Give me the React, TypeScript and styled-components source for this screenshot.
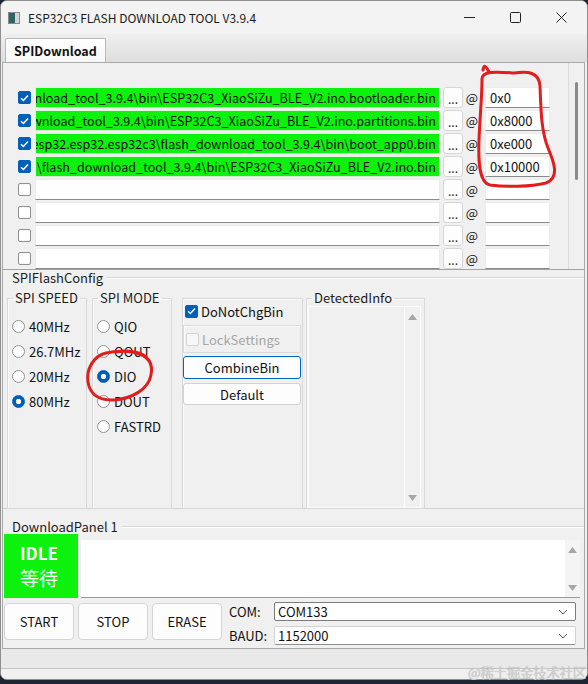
import React from "react";
import styled, { createGlobalStyle } from "styled-components";

const GlobalStyle = createGlobalStyle`
  html, body { margin: 0; padding: 0; background: #1d2633; }
  body {
    width: 588px; height: 684px; overflow: hidden;
    font-family: "Noto Sans CJK SC", "Noto Sans", sans-serif;
    font-size: 13px; color: #111;
  }
  * { box-sizing: border-box; }
`;

const Screen = styled.div`
  position: relative;
  width: 588px;
  height: 684px;
  background: #1d2633;
`;

const Window = styled.div`
  width: 588px;
  height: 680px;
  background: #f0f0f0;
  border: 1px solid #8e8e8e;
  border-radius: 7px;
  overflow: hidden;
  display: flex;
  flex-direction: column;
`;

const TitleBar = styled.div`
  height: 33px;
  flex-shrink: 0;
  display: flex;
  align-items: center;
  background: #f3f3f3;
`;

const AppIcon = styled.span`
  width: 12px;
  height: 12px;
  margin-left: 7px;
  border: 1px solid #8a8a8a;
  background: linear-gradient(to right, #2f6468 0 58%, #cfd6d6 58%);
`;

const TitleText = styled.span`
  margin-left: 8px;
  font-size: 12px;
  color: #1b1b1b;
`;

const Controls = styled.div`
  margin-left: auto;
  margin-right: 3px;
  display: flex;
`;

const CtrlButton = styled.span`
  width: 46px;
  height: 33px;
  display: flex;
  align-items: center;
  justify-content: center;
`;

const TabBar = styled.div`
  height: 28px;
  flex-shrink: 0;
  display: flex;
  align-items: flex-end;
  padding-left: 4px;
  background: linear-gradient(to bottom, #efefef, #dedede);
`;

const Tab = styled.div`
  height: 24px;
  padding: 0 8px;
  display: flex;
  align-items: center;
  font-weight: 700;
  font-size: 12.5px;
  background: linear-gradient(to bottom, #ffffff, #f6f6f6);
  border: 1px solid #b9b9b9;
  border-bottom: none;
  border-radius: 2px 2px 0 0;
`;

const TabPane = styled.div`
  height: 587px;
  flex-shrink: 0;
  margin: 0 2px 0 1px;
  border: 1px solid #a9a9a9;
  display: flex;
  flex-direction: column;
`;

/* ---------- file list ---------- */
const FileSection = styled.div`
  height: 207px;
  flex-shrink: 0;
  display: flex;
  border-bottom: 1px solid #a3a3a3;
`;

const FileList = styled.div`
  flex: 1;
  padding-top: 24px;
  display: flex;
  flex-direction: column;
  gap: 2px;
  overflow: hidden;
`;

const FileRow = styled.div`
  height: 21px;
  flex-shrink: 0;
  display: flex;
  align-items: center;
`;

const CheckCell = styled.div`
  width: 32px;
  display: flex;
  justify-content: flex-end;
  padding-right: 4px;
`;

const CheckBox = styled.span<{ $checked?: boolean; $disabled?: boolean }>`
  width: 13px;
  height: 13px;
  flex-shrink: 0;
  border-radius: 2px;
  display: inline-flex;
  align-items: center;
  justify-content: center;
  border: 1px solid
    ${(p) => (p.$checked ? "#005fb8" : p.$disabled ? "#d3d3d3" : "#8f8f8f")};
  background: ${(p) => (p.$checked ? "#005fb8" : p.$disabled ? "#f7f7f7" : "#ffffff")};
`;

const PathField = styled.div<{ $filled?: boolean }>`
  width: 405px;
  height: 21px;
  display: flex;
  align-items: center;
  justify-content: flex-end;
  overflow: hidden;
  white-space: nowrap;
  padding: 0 3px 0 0;
  font-size: 12.6px;
  background: ${(p) => (p.$filled ? "#0cf20c" : "#ffffff")};
  border: 1px solid ${(p) => (p.$filled ? "#dff5df" : "#ececec")};
  border-bottom-color: ${(p) => (p.$filled ? "#cfe9cf" : "#8a8a8a")};
`;

const PathText = styled.span`
  flex-shrink: 0;
`;

const DotsButton = styled.span`
  width: 20px;
  height: 21px;
  margin-left: 3px;
  border: 1px solid #d6d6d6;
  border-radius: 3px;
  background: #fdfdfd;
  display: flex;
  align-items: center;
  justify-content: center;
  font-size: 12px;
  line-height: 1;
  padding-top: 2px;
  color: #222;
`;

const AtSign = styled.span`
  width: 22px;
  text-align: center;
  padding-right: 4px;
  font-size: 13px;
`;

const AddrField = styled.div`
  width: 65px;
  height: 21px;
  padding-left: 4px;
  display: flex;
  align-items: center;
  font-size: 13px;
  background: #ffffff;
  border: 1px solid #ededed;
  border-bottom-color: #8a8a8a;
`;

const ListScroll = styled.div`
  width: 16px;
  flex-shrink: 0;
  border-left: 1px solid #dcdcdc;
  padding-top: 19px;
  display: flex;
  justify-content: center;
`;

const ListThumb = styled.span`
  width: 3px;
  height: 98px;
  border-radius: 2px;
  background: #8b8b8b;
`;

/* ---------- sections ---------- */
const SectionHeader = styled.div`
  height: 15px;
  flex-shrink: 0;
  display: flex;
  align-items: center;
  padding-left: 9px;
  font-size: 13px;
  color: #1b1b1b;
`;

const HeaderLine = styled.span`
  flex: 1;
  margin-left: 3px;
  border-top: 1px solid #d6d6d6;
  border-bottom: 1px solid #ffffff;
`;

const ConfigSection = styled.div`
  height: 239px;
  flex-shrink: 0;
  display: flex;
  flex-direction: column;
  border-bottom: 1px solid #d2d2d2;
`;

const GroupRow = styled.div`
  flex: 1;
  margin-top: 5px;
  margin-bottom: -1px;
  padding-left: 4px;
  display: flex;
  align-items: stretch;
`;

const Group = styled.fieldset<{ $w: number; $gap?: number; $top?: number }>`
  width: ${(p) => p.$w}px;
  margin: ${(p) => p.$top ?? 0}px ${(p) => p.$gap ?? 0}px 0 0;
  padding: 0;
  min-width: 0;
  border: 1px solid #d8d8d8;
  box-shadow: inset 1px 1px 0 #fafafa;
  display: flex;
  flex-direction: column;
`;

const Legend = styled.legend`
  margin-left: 5px;
  padding: 0 2px;
  font-size: 13px;
  line-height: 16px;
  color: #1b1b1b;
`;

const RadioList = styled.div`
  padding: 8px 0 0 4px;
  display: flex;
  flex-direction: column;
`;

const RadioItem = styled.div`
  height: 25px;
  display: flex;
  align-items: center;
  gap: 4px;
  font-size: 13px;
`;

const RadioDot = styled.span<{ $checked?: boolean }>`
  width: 13px;
  height: 13px;
  flex-shrink: 0;
  border-radius: 50%;
  border: 1px solid ${(p) => (p.$checked ? "#005fb8" : "#929292")};
  background: ${(p) =>
    p.$checked
      ? "radial-gradient(circle, #ffffff 0 2.4px, #005fb8 3px)"
      : "#ffffff"};
`;

const OptionRow = styled.div`
  height: 16px;
  margin: 4px 0 0 2px;
  display: flex;
  align-items: center;
  gap: 3px;
  font-size: 13px;
`;

const LockFrame = styled.div`
  height: 28px;
  margin-top: 6px;
  width: 118px;
  border: 1px solid #dadada;
  box-shadow: inset 1px 1px 0 #fbfbfb;
  display: flex;
  align-items: center;
  gap: 3px;
  padding-left: 2px;
  font-size: 13px;
  color: #a6a6a6;
`;

const SmallButton = styled.div<{ $focus?: boolean; $mt: number; $h: number }>`
  width: 118px;
  height: ${(p) => p.$h}px;
  margin-top: ${(p) => p.$mt}px;
  border: 1px solid ${(p) => (p.$focus ? "#0067c0" : "#d2d2d2")};
  border-radius: 3px;
  background: #fdfdfd;
  display: flex;
  align-items: center;
  justify-content: center;
  font-size: 13px;
`;

const InfoBox = styled.div`
  flex: 1;
  margin: 0 3px 0 1px;
  border: 1px solid #fbfbfb;
  display: flex;
  justify-content: flex-end;
`;

const InfoScroll = styled.div`
  width: 16px;
  border-left: 1px solid #fbfbfb;
  display: flex;
  flex-direction: column;
  align-items: center;
  justify-content: space-between;
  padding: 7px 0 6px;
`;

/* ---------- download panel ---------- */
const DownloadSection = styled.div`
  flex: 1;
  display: flex;
  flex-direction: column;
  padding-top: 10px;
`;

const StatusRow = styled.div`
  height: 64px;
  flex-shrink: 0;
  display: flex;
  align-items: flex-end;
  padding-left: 1px;
`;

const IdleBox = styled.div`
  width: 74px;
  height: 64px;
  background: #0cf20c;
  color: #ffffff;
  padding: 8px 0 0 16px;
  display: flex;
  flex-direction: column;
  gap: 3px;
`;

const IdleEn = styled.span`
  font-size: 17px;
  font-weight: 700;
  line-height: 22px;
`;

const IdleZh = styled.span`
  font-size: 19px;
  line-height: 22px;
`;

const LogArea = styled.div`
  width: 499px;
  height: 58px;
  margin-left: 3px;
  background: #ffffff;
  border-bottom: 1px solid #9a9a9a;
  display: flex;
  justify-content: flex-end;
`;

const LogScroll = styled.div`
  width: 15px;
  background: #f4f4f4;
  display: flex;
  flex-direction: column;
  align-items: center;
  justify-content: space-between;
  padding: 7px 0 6px;
`;

const ActionRow = styled.div`
  margin-top: 4px;
  padding-left: 1px;
  display: flex;
  align-items: flex-start;
`;

const ActionButton = styled.div`
  width: 70px;
  height: 37px;
  margin: 1px 4px 0 0;
  border: 1px solid #d4d4d4;
  border-radius: 4px;
  background: #fdfdfd;
  display: flex;
  align-items: center;
  justify-content: center;
  font-size: 13px;
`;

const PortForm = styled.div`
  margin-left: 3px;
  display: grid;
  grid-template-columns: 45px 302px;
  grid-auto-rows: 19px;
  row-gap: 5px;
  align-items: center;
`;

const FormLabel = styled.span`
  font-size: 13px;
`;

const Combo = styled.div<{ $active?: boolean }>`
  height: 19px;
  padding: 0 7px 0 3px;
  display: flex;
  align-items: center;
  justify-content: space-between;
  font-size: 13px;
  background: #ffffff;
  border: 1px solid ${(p) => (p.$active ? "#7b7b7b" : "#d3d3d3")};
  border-bottom-color: ${(p) => (p.$active ? "#7b7b7b" : "#8f8f8f")};
  border-radius: 2px;
`;

const StatusBar = styled.div`
  height: 20px;
  flex-shrink: 0;
  background: #e9e9e9;
  border-bottom: 1px solid #c4c4c4;
`;

const BottomFill = styled.div`
  flex: 1;
  background: #f0f0f0;
`;

const Watermark = styled.span`
  position: absolute;
  right: 2px;
  bottom: 2px;
  font-size: 13.5px;
  color: #cfcfcf;
  text-shadow: 0 0 1px rgba(90, 90, 90, 0.35);
  letter-spacing: -0.3px;
  white-space: nowrap;
`;

const Annotations = styled.svg`
  position: absolute;
  left: 0;
  top: 0;
  pointer-events: none;
`;

/* ---------- small drawings ---------- */
const Tick = () => (
  <svg width="9" height="8" viewBox="0 0 9 8">
    <path d="M1 4.2 L3.4 6.5 L8 1.5" fill="none" stroke="#fff" strokeWidth="1.5" />
  </svg>
);

const Up = () => (
  <svg width="9" height="6" viewBox="0 0 9 6">
    <polygon points="4.5,0 9,6 0,6" fill="#a6a6a6" />
  </svg>
);

const Down = () => (
  <svg width="9" height="6" viewBox="0 0 9 6">
    <polygon points="0,0 9,0 4.5,6" fill="#a6a6a6" />
  </svg>
);

const Chevron = () => (
  <svg width="10" height="6" viewBox="0 0 10 6">
    <path d="M1 1 L5 5 L9 1" fill="none" stroke="#555" strokeWidth="1" />
  </svg>
);

const base = "D:\\Arduino\\build\\esp32.esp32.esp32c3\\flash_download_tool_3.9.4\\bin\\";

const files = [
  { path: base + "ESP32C3_XiaoSiZu_BLE_V2.ino.bootloader.bin", addr: "0x0" },
  { path: base + "ESP32C3_XiaoSiZu_BLE_V2.ino.partitions.bin", addr: "0x8000" },
  { path: base + "boot_app0.bin", addr: "0xe000" },
  { path: base + "ESP32C3_XiaoSiZu_BLE_V2.ino.bin", addr: "0x10000" },
  { path: "", addr: "" },
  { path: "", addr: "" },
  { path: "", addr: "" },
  { path: "", addr: "" },
];

const speeds = [
  { label: "40MHz", on: false },
  { label: "26.7MHz", on: false },
  { label: "20MHz", on: false },
  { label: "80MHz", on: true },
];

const modes = [
  { label: "QIO", on: false },
  { label: "QOUT", on: false },
  { label: "DIO", on: true },
  { label: "DOUT", on: false },
  { label: "FASTRD", on: false },
];

export default function App() {
  return (
    <Screen>
      <GlobalStyle />
      <Window>
        <TitleBar>
          <AppIcon />
          <TitleText>ESP32C3 FLASH DOWNLOAD TOOL V3.9.4</TitleText>
          <Controls>
            <CtrlButton>
              <svg width="11" height="11" viewBox="0 0 11 11">
                <path d="M0 5.5 H11" stroke="#222" strokeWidth="1" />
              </svg>
            </CtrlButton>
            <CtrlButton>
              <svg width="11" height="11" viewBox="0 0 11 11">
                <rect x="0.5" y="0.5" width="10" height="10" rx="1" fill="none" stroke="#222" strokeWidth="1" />
              </svg>
            </CtrlButton>
            <CtrlButton>
              <svg width="11" height="11" viewBox="0 0 11 11">
                <path d="M0.5 0.5 L10.5 10.5 M10.5 0.5 L0.5 10.5" stroke="#222" strokeWidth="1" />
              </svg>
            </CtrlButton>
          </Controls>
        </TitleBar>

        <TabBar>
          <Tab>SPIDownload</Tab>
        </TabBar>

        <TabPane>
          <FileSection>
            <FileList>
              {files.map((f, i) => (
                <FileRow key={i}>
                  <CheckCell>
                    <CheckBox $checked={!!f.path}>{f.path && <Tick />}</CheckBox>
                  </CheckCell>
                  <PathField $filled={!!f.path}>
                    <PathText>{f.path}</PathText>
                  </PathField>
                  <DotsButton>...</DotsButton>
                  <AtSign>@</AtSign>
                  <AddrField>{f.addr}</AddrField>
                </FileRow>
              ))}
            </FileList>
            <ListScroll>
              <ListThumb />
            </ListScroll>
          </FileSection>

          <ConfigSection>
            <SectionHeader>
              SPIFlashConfig
              <HeaderLine />
            </SectionHeader>
            <GroupRow>
              <Group $w={80} $gap={5}>
                <Legend>SPI SPEED</Legend>
                <RadioList>
                  {speeds.map((s) => (
                    <RadioItem key={s.label}>
                      <RadioDot $checked={s.on} />
                      {s.label}
                    </RadioItem>
                  ))}
                </RadioList>
              </Group>
              <Group $w={80} $gap={10}>
                <Legend>SPI MODE</Legend>
                <RadioList>
                  {modes.map((s) => (
                    <RadioItem key={s.label}>
                      <RadioDot $checked={s.on} />
                      {s.label}
                    </RadioItem>
                  ))}
                </RadioList>
              </Group>
              <Group $w={121} $gap={3} $top={8}>
                <OptionRow>
                  <CheckBox $checked>
                    <Tick />
                  </CheckBox>
                  DoNotChgBin
                </OptionRow>
                <LockFrame>
                  <CheckBox $disabled />
                  LockSettings
                </LockFrame>
                <SmallButton $focus $mt={3} $h={23}>
                  CombineBin
                </SmallButton>
                <SmallButton $mt={4} $h={22}>
                  Default
                </SmallButton>
              </Group>
              <Group $w={119}>
                <Legend>DetectedInfo</Legend>
                <InfoBox>
                  <InfoScroll>
                    <Up />
                    <Down />
                  </InfoScroll>
                </InfoBox>
              </Group>
            </GroupRow>
          </ConfigSection>

          <DownloadSection>
            <SectionHeader>
              DownloadPanel 1
              <HeaderLine />
            </SectionHeader>
            <StatusRow>
              <IdleBox>
                <IdleEn>IDLE</IdleEn>
                <IdleZh>等待</IdleZh>
              </IdleBox>
              <LogArea>
                <LogScroll>
                  <Up />
                  <Down />
                </LogScroll>
              </LogArea>
            </StatusRow>
            <ActionRow>
              <ActionButton>START</ActionButton>
              <ActionButton>STOP</ActionButton>
              <ActionButton>ERASE</ActionButton>
              <PortForm>
                <FormLabel>COM:</FormLabel>
                <Combo $active>
                  COM133
                  <Chevron />
                </Combo>
                <FormLabel>BAUD:</FormLabel>
                <Combo>
                  1152000
                  <Chevron />
                </Combo>
              </PortForm>
            </ActionRow>
          </DownloadSection>
        </TabPane>

        <StatusBar />
        <BottomFill />
      </Window>

      <Watermark>@稀土掘金技术社区</Watermark>

      <Annotations width="588" height="684" viewBox="0 0 588 684">
        <path
          d="M482 80 C481 70 498 72 514 73 C528 71 539 72 540 86 C541 110 541 130 548 148 C554 162 560 178 546 183 C530 187 506 187 490 185 C480 183 478 165 479 140 C480 115 482 96 482 80 M489 72 C486 66 484 64 483 70"
          fill="none"
          stroke="#e11d1d"
          strokeWidth="3"
          strokeLinecap="round"
        />
        <path
          d="M146 357 C139 350 121 350 106 353 C93 356 86 370 88 382 C90 395 100 401 115 400 C132 398 148 390 151 375 C153 365 150 358 140 354 C132 351 122 351 116 352"
          fill="none"
          stroke="#e11d1d"
          strokeWidth="3"
          strokeLinecap="round"
        />
      </Annotations>
    </Screen>
  );
}
